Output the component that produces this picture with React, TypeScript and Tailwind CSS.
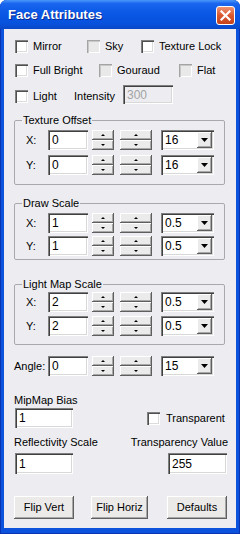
import React from 'react';

const sunken =
    'shadow-[inset_1px_1px_0_#7f7f7f,inset_2px_2px_0_#404040,inset_-1px_-1px_0_#ffffff,inset_-2px_-2px_0_#d8d8d8]';
const raised =
    'shadow-[inset_-1px_-1px_0_#5f5f5f,inset_1px_1px_0_#ffffff,inset_-2px_-2px_0_#a8a8a8]';

const Check: React.FC<{ dim?: boolean }> = ({ dim }) => (
    <span
        className={
            dim
                ? 'block w-[13px] h-[13px] shrink-0 bg-[#e9e9ea] shadow-[inset_1px_1px_0_#a4a4a4,inset_2px_2px_0_#c8c8c8,inset_-1px_-1px_0_#ffffff]'
                : 'block w-[13px] h-[13px] shrink-0 bg-white shadow-[inset_1px_1px_0_#808080,inset_2px_2px_0_#505050,inset_-1px_-1px_0_#ffffff,inset_-2px_-2px_0_#dcdcdc]'
        }
    />
);

const CheckLabel: React.FC<{ label: string; dim?: boolean; className?: string }> = ({ label, dim, className = '' }) => (
    <div className={`flex items-center h-[13px] ${className}`}>
        <Check dim={dim} />
        <span className="ml-[5px] leading-[13px] whitespace-nowrap">{label}</span>
    </div>
);

const TextBox: React.FC<{ value: string; className?: string; disabled?: boolean }> = ({ value, className = '', disabled }) => (
    <div
        className={`flex items-center pl-[4px] text-[12px] ${sunken} ${
            disabled ? 'bg-[#ededf1] text-[#a3a3a3]' : 'bg-white text-black'
        } ${className}`}
    >
        {value}
    </div>
);

const SpinHalf: React.FC<{ up?: boolean }> = ({ up }) => (
    <div className={`h-[10px] flex items-center justify-center bg-[#ebebeb] ${raised}`}>
        <svg width="4" height="2" viewBox="0 0 4 2">
            <path d={up ? 'M2 0L4 2H0z' : 'M0 0h4L2 2z'} fill="#000" />
        </svg>
    </div>
);

const Spin: React.FC<{ className: string }> = ({ className }) => (
    <div className={`flex flex-col h-[20px] shrink-0 ${className}`}>
        <SpinHalf up />
        <SpinHalf />
    </div>
);

const Dropdown: React.FC<{ value: string }> = ({ value }) => (
    <div className={`ml-[9px] w-[53px] h-[20px] flex items-center bg-white pl-[4px] pr-[2px] text-[12px] ${sunken}`}>
        <span className="flex-1">{value}</span>
        <div className={`w-[15px] h-[16px] flex items-center justify-center bg-[#ebebeb] ${raised}`}>
            <svg width="7" height="4" viewBox="0 0 7 4">
                <path d="M0 0h7L3.5 4z" fill="#000" />
            </svg>
        </div>
    </div>
);

const ValueRow: React.FC<{ label: string; value: string; step: string; labelClass: string; className?: string }> = ({
    label,
    value,
    step,
    labelClass,
    className = '',
}) => (
    <div className={`flex items-center h-[20px] ${className}`}>
        <span className={`shrink-0 ${labelClass}`}>{label}</span>
        <TextBox value={value} className="w-[40px] h-[20px]" />
        <Spin className="ml-[4px] w-[22px]" />
        <Spin className="ml-[6px] w-[32px]" />
        <Dropdown value={step} />
    </div>
);

const Group: React.FC<{ title: string; className: string; children: React.ReactNode }> = ({ title, className, children }) => (
    <fieldset className={`ml-[10px] w-[211px] border border-[#a9a9ad] rounded-[2px] ${className}`}>
        <legend className="ml-[7px] px-[1px] leading-[13px]">{title}</legend>
        {children}
    </fieldset>
);

const Button: React.FC<{ label: string; className: string }> = ({ label, className }) => (
    <div className={`h-[23px] flex items-center justify-center bg-[#ebeae9] ${raised} ${className}`}>{label}</div>
);

export default function App() {
    return (
        <div className="w-[240px] h-[534px] flex flex-col bg-[#0c52dc] rounded-t-[7px] overflow-hidden font-['Liberation_Sans',Arial,sans-serif] text-[11px] text-black shadow-[inset_1px_0_0_#0a33b4,inset_-1px_0_0_#0a33b4,inset_0_-1px_0_#0a33b4]">
            {/* title bar */}
            <div className="h-[29px] shrink-0 flex items-center pl-[8px] bg-[linear-gradient(to_bottom,#4a98fb_0%,#1a66ee_12%,#0a58e6_45%,#0752dd_80%,#0848c8_100%)]">
                <span className="text-white text-[13px] font-bold [text-shadow:1px_1px_0_#0b2a8f]">Face Attributes</span>
                <div className="ml-auto mr-[5px] mt-[2px] w-[19px] h-[19px] rounded-[3px] border border-white bg-[linear-gradient(to_bottom,#ee9474,#d9582f_50%,#c4431b)] flex items-center justify-center">
                    <svg width="11" height="11" viewBox="0 0 11 11">
                        <path d="M1.5 1.5l8 8M9.5 1.5l-8 8" stroke="#fff" strokeWidth="2.2" strokeLinecap="square" />
                    </svg>
                </div>
            </div>

            {/* client area */}
            <div className="flex-1 mx-[4px] mb-[6px] bg-[#ededf1] flex flex-col">
                <div className="mt-[11px] ml-[11px] flex">
                    <CheckLabel label="Mirror" className="w-[72px]" />
                    <CheckLabel label="Sky" dim className="w-[54px]" />
                    <CheckLabel label="Texture Lock" />
                </div>
                <div className="mt-[11px] ml-[11px] flex">
                    <CheckLabel label="Full Bright" className="w-[84px]" />
                    <CheckLabel label="Gouraud" dim className="w-[80px]" />
                    <CheckLabel label="Flat" dim />
                </div>
                <div className="mt-[8px] ml-[11px] flex items-center h-[19px]">
                    <CheckLabel label="Light" className="w-[59px] mt-[3px]" />
                    <span className="w-[49px] mt-[3px]">Intensity</span>
                    <TextBox value="300" disabled className="w-[50px] h-[19px]" />
                </div>

                <Group title="Texture Offset" className="mt-[10px] pt-[3px] pb-[9px]">
                    <ValueRow label="X:" value="0" step="16" labelClass="w-[33px] pl-[11px]" />
                    <ValueRow label="Y:" value="0" step="16" labelClass="w-[33px] pl-[11px]" className="mt-[5px]" />
                </Group>

                <Group title="Draw Scale" className="mt-[12px] pt-[3px] pb-[3px]">
                    <ValueRow label="X:" value="1" step="0.5" labelClass="w-[33px] pl-[11px]" />
                    <ValueRow label="Y:" value="1" step="0.5" labelClass="w-[33px] pl-[11px]" className="mt-[3px]" />
                </Group>

                <Group title="Light Map Scale" className="mt-[18px] pt-[1px] pb-[8px]">
                    <ValueRow label="X:" value="2" step="0.5" labelClass="w-[33px] pl-[11px]" />
                    <ValueRow label="Y:" value="2" step="0.5" labelClass="w-[33px] pl-[11px]" className="mt-[4px]" />
                </Group>

                <ValueRow label="Angle:" value="0" step="15" labelClass="w-[34px] ml-[10px]" className="mt-[11px]" />

                <span className="mt-[18px] ml-[10px] leading-[13px]">MipMap Bias</span>
                <div className="mt-[1px] flex items-center h-[20px]">
                    <TextBox value="1" className="ml-[11px] w-[58px] h-[20px]" />
                    <div className="ml-[74px] flex items-center h-[13px]">
                        <Check />
                        <span className="ml-[6px] leading-[13px]">Transparent</span>
                    </div>
                </div>
                <div className="mt-[8px] flex leading-[13px]">
                    <span className="ml-[10px]">Reflectivity Scale</span>
                    <span className="ml-auto mr-[8px]">Transparency Value</span>
                </div>
                <div className="mt-[4px] flex">
                    <TextBox value="1" className="ml-[11px] w-[58px] h-[21px]" />
                    <TextBox value="255" className="ml-auto mr-[9px] w-[59px] h-[21px]" />
                </div>

                <div className="mt-[22px] flex">
                    <Button label="Flip Vert" className="ml-[10px] w-[60px]" />
                    <Button label="Flip Horiz" className="ml-[17px] w-[57px]" />
                    <Button label="Defaults" className="ml-[19px] w-[60px]" />
                </div>
            </div>
        </div>
    );
}
